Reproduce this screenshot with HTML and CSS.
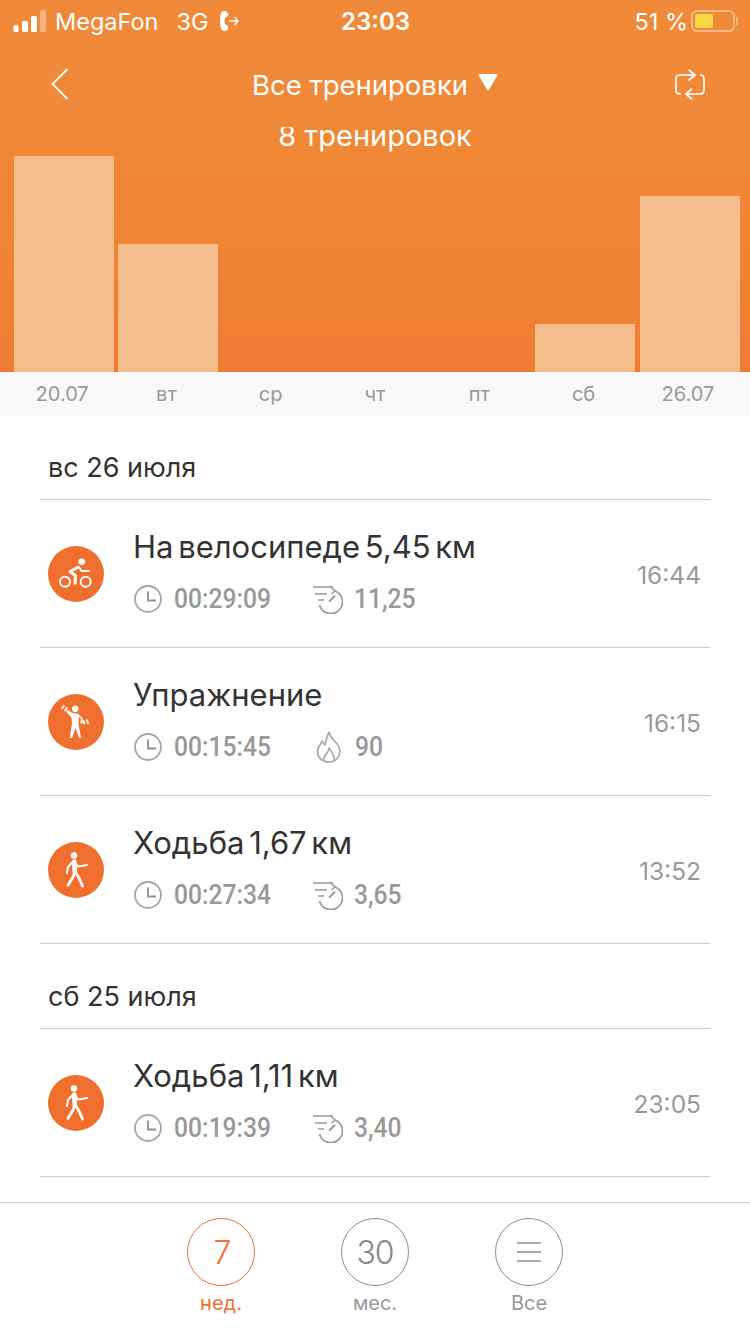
FILE: index.html
```html
<!DOCTYPE html>
<html lang="ru">
<head>
<meta charset="utf-8">
<title>Все тренировки</title>
<link rel="stylesheet" href="styles.css">
</head>
<body>
<svg class="sprite" aria-hidden="true">
  <symbol id="i-clock" viewBox="0 0 28 28"><circle cx="14" cy="14" r="13" fill="none" stroke="#a6a6a6" stroke-width="1.8"/><path d="M14 6.500V15.500H22" fill="none" stroke="#8f8f8f" stroke-width="1.8"/></symbol>
  <symbol id="i-speed" viewBox="0 -2 30 30"><g fill="none" stroke="#999" stroke-width="1.700"><path d="M0 1H20M2 8H14M5 14H11"/><path d="M6.500 19A11.700 11.700 0 1 0 22 5"/><path d="M17 0L22 5L18.500 8" stroke-width="1.500"/><path d="M16 15.700L22 9.700" stroke-width="2"/></g></symbol>
  <symbol id="i-flame" viewBox="0 0 26 32"><path d="M13 1C14 7 20 10 23 16C26 23 21 31 13 31C5 31 0 25 2 18C3 15 5 13 6 10C7 12 8 13 9 14C10 10 11 5 13 1Z M8 30C7 26 9 25 11 22C12 20 13 19 13 17C15 20 19 24 18 30" fill="none" stroke="#a6a6a6" stroke-width="1.600" stroke-linejoin="round"/></symbol>
  <symbol id="i-bike" viewBox="0 0 56 56"><circle cx="33.700" cy="15.700" r="3.300" fill="#fff"/><circle cx="17" cy="35.700" r="5" fill="none" stroke="#fff" stroke-width="1.900"/><circle cx="37.700" cy="35.700" r="5" fill="none" stroke="#fff" stroke-width="1.900"/><path d="M30.500 21L22 25.500L27.500 29.500L27 38.500" fill="none" stroke="#fff" stroke-width="3" stroke-linejoin="round"/><path d="M30.500 20.500L33.500 25H41.500" fill="none" stroke="#fff" stroke-width="2" stroke-linejoin="round"/></symbol>
  <symbol id="i-walk" viewBox="0 0 56 56"><circle cx="26" cy="13.500" r="3.200" fill="#fff"/><path d="M26.200 19.500L26.700 30.500" fill="none" stroke="#fff" stroke-width="4.500" stroke-linecap="round"/><path d="M26.700 30.500L25 35L20 43.300M28 31L31 36L34.500 44" fill="none" stroke="#fff" stroke-width="2.800" stroke-linecap="round" stroke-linejoin="round"/><path d="M27 20L30 24.500L39 23" fill="none" stroke="#fff" stroke-width="1.900" stroke-linecap="round" stroke-linejoin="round"/><path d="M24 20.500L20 25L19 31" fill="none" stroke="#fff" stroke-width="2" stroke-linecap="round" stroke-linejoin="round"/></symbol>
  <symbol id="i-gym" viewBox="0 0 56 56"><circle cx="27.300" cy="14.700" r="3.300" fill="#fff"/><path d="M24.500 19L31 20L30.500 30L33 44H31L27.500 34L24 44H21.700L24 29.500L23.500 23.500L18 17.500L19.500 16Z" fill="#fff"/><path d="M31 21.500L34 25L33 28.500H37" fill="none" stroke="#fff" stroke-width="1.400"/><path d="M13.500 15L16.500 11.500M16.500 17L19.500 13.500M35 26L37 30.500M38.500 25.500L40.500 30" stroke="#fff" stroke-width="2" fill="none" opacity="0.800"/></symbol>
</svg>
<div class="page">
  <header class="top">
    <div class="statusbar">
      <div class="status-left">
        <svg class="signal" viewBox="0 0 34 22"><rect x="0.500" y="15" width="5" height="7" rx="1.500" fill="#fff"/><rect x="9" y="11" width="6" height="11" rx="1.500" fill="#fff"/><rect x="18" y="6" width="6" height="16" rx="1.500" fill="#fff"/><rect x="27" y="0" width="6" height="22" rx="1.500" fill="#fff" opacity="0.350"/></svg>
        <span class="carrier">MegaFon</span>
        <span class="net">3G</span>
        <svg class="call" viewBox="0 0 19 22"><path d="M4 1C1 1 0 5 0 11S1 21 4 21C7 21 8.500 19 8 16L5 14C4.500 12 4.500 10 5 8L8 6C8.500 3 7 1 4 1Z" fill="#fff"/><path d="M9 11H18M14.500 7L18 11L14.500 15" fill="none" stroke="#fff" stroke-width="1.300"/></svg>
      </div>
      <div class="clock">23:03</div>
      <div class="status-right">
        <span class="pct">51 %</span>
        <span class="battery"><span class="battery-fill"></span></span>
        <span class="battery-cap"></span>
      </div>
    </div>
    <nav class="navbar">
      <svg class="back" viewBox="0 0 18 32"><path d="M16.500 1L1.500 16L16.500 31" fill="none" stroke="#fff" stroke-width="1.800"/></svg>
      <div class="nav-title"><span>Все тренировки</span><svg class="caret" viewBox="0 0 20 17"><path d="M1.500 1H18.500L10 15.500Z" fill="#fff" stroke="#fff" stroke-width="2" stroke-linejoin="round"/></svg></div>
      <svg class="swap" viewBox="0 0 30 31"><path d="M20 6H5Q1 6 1 10V21Q1 25 5 25H6M25 6Q29 6 29 10V21Q29 25 25 25H11M13.500 .5L20 6L13.500 11.500M17 19.500L11 25L17 30.500" fill="none" stroke="#fff" stroke-width="1.700"/></svg>
    </nav>
    <section class="chart">
      <div class="chart-title">8 тренировок</div>
      <div class="bars">
        <div class="bar" style="height:216px"></div>
        <div class="bar" style="height:128px"></div>
        <div class="bar" style="height:0"></div>
        <div class="bar" style="height:0"></div>
        <div class="bar" style="height:0"></div>
        <div class="bar" style="height:48px"></div>
        <div class="bar" style="height:176px"></div>
      </div>
    </section>
    <div class="axis"><span>20.07</span><span>вт</span><span>ср</span><span>чт</span><span>пт</span><span>сб</span><span>26.07</span></div>
  </header>

  <main class="list">
    <h2 class="day">вс 26 июля</h2>
    <article class="row">
      <div class="badge"><svg class="badge-icon"><use href="#i-bike"/></svg></div>
      <div class="info">
        <div class="name">На велосипеде 5,45 км</div>
        <div class="stats">
          <div class="stat stat-time"><svg class="ic-clock"><use href="#i-clock"/></svg><span class="val">00:29:09</span></div>
          <div class="stat"><svg class="ic-speed"><use href="#i-speed"/></svg><span class="val">11,25</span></div>
        </div>
      </div>
      <time class="when">16:44</time>
    </article>
    <article class="row">
      <div class="badge"><svg class="badge-icon"><use href="#i-gym"/></svg></div>
      <div class="info">
        <div class="name">Упражнение</div>
        <div class="stats">
          <div class="stat stat-time"><svg class="ic-clock"><use href="#i-clock"/></svg><span class="val">00:15:45</span></div>
          <div class="stat"><svg class="ic-flame"><use href="#i-flame"/></svg><span class="val">90</span></div>
        </div>
      </div>
      <time class="when">16:15</time>
    </article>
    <article class="row">
      <div class="badge"><svg class="badge-icon"><use href="#i-walk"/></svg></div>
      <div class="info">
        <div class="name">Ходьба 1,67 км</div>
        <div class="stats">
          <div class="stat stat-time"><svg class="ic-clock"><use href="#i-clock"/></svg><span class="val">00:27:34</span></div>
          <div class="stat"><svg class="ic-speed"><use href="#i-speed"/></svg><span class="val">3,65</span></div>
        </div>
      </div>
      <time class="when">13:52</time>
    </article>
    <h2 class="day day-next">сб 25 июля</h2>
    <article class="row">
      <div class="badge"><svg class="badge-icon"><use href="#i-walk"/></svg></div>
      <div class="info">
        <div class="name">Ходьба 1,11 км</div>
        <div class="stats">
          <div class="stat stat-time"><svg class="ic-clock"><use href="#i-clock"/></svg><span class="val">00:19:39</span></div>
          <div class="stat"><svg class="ic-speed"><use href="#i-speed"/></svg><span class="val">3,40</span></div>
        </div>
      </div>
      <time class="when">23:05</time>
    </article>
  </main>

  <footer class="tabs">
    <div class="tab tab-active"><div class="ring">7</div><div class="tab-label">нед.</div></div>
    <div class="tab"><div class="ring">30</div><div class="tab-label">мес.</div></div>
    <div class="tab"><div class="ring"><svg class="menu" viewBox="0 0 24 20"><path d="M0 1H24M0 10H24M0 19H24" stroke="#8f8f8f" stroke-width="1.600"/></svg></div><div class="tab-label">Все</div></div>
  </footer>
</div>
</body>
</html>
```

FILE: styles.css
```css
* { box-sizing: border-box; }
html, body { margin: 0; padding: 0; }
body { width: 750px; height: 1334px; overflow: hidden; background: #fff; font-family: Inter, "Noto Sans", "Liberation Sans", sans-serif; color: #333; }
.sprite { display: none; }
.page { width: 750px; height: 1334px; display: flex; flex-direction: column; }

.top { flex: none; color: #fff; }
.statusbar { height: 42px; background: #f08a38; display: grid; grid-template-columns: 1fr auto 1fr; align-items: center; padding: 0 12px 0 13px; font-size: 23.5px; }
.status-left { display: flex; align-items: center; }
.signal { width: 34px; height: 22px; margin-right: 8px; }
.carrier { margin-right: 18px; }
.net { margin-right: 11px; }
.call { width: 19px; height: 22px; }
.clock { font-weight: 600; font-size: 24px; }
.status-right { display: flex; align-items: center; justify-content: flex-end; }
.pct { margin-right: 3px; }
.battery { width: 44px; height: 22px; border: 2px solid rgba(255,255,255,.4); border-radius: 6px; padding: 2px; display: block; }
.battery-fill { display: block; width: 18px; height: 100%; background: #f9d848; border-radius: 2px; }
.battery-cap { width: 2px; height: 8px; background: rgba(255,255,255,.4); margin-left: 1px; }

.navbar { height: 85px; background: #f08a38; display: flex; align-items: center; justify-content: space-between; padding: 0 45px 0 51px; }
.back { width: 18px; height: 32px; margin-bottom: 1px; }
.nav-title { display: flex; align-items: center; gap: 10px; font-size: 27.5px; margin-left: 6px; }
.caret { width: 20px; height: 17px; margin-bottom: 4px; }
.swap { width: 30px; height: 31px; }

.chart { height: 245px; display: flex; flex-direction: column; overflow: hidden; background: linear-gradient(#f08936, #ee7d33); }
.chart-title { height: 18px; line-height: 18px; text-align: center; font-size: 29px; flex: none; }
.bars { flex: 1; display: grid; grid-template-columns: repeat(7, 100px); column-gap: 4.25px; align-items: end; padding-left: 14px; }
.bar { background: #f4bd8c; }

.axis { height: 44px; background: #f8f8f8; display: grid; grid-template-columns: repeat(7, 1fr); padding: 0 10px; align-items: center; text-align: center; color: #999; font-size: 20px; }

.list { flex: 1; min-height: 0; overflow: hidden; padding: 0 40px; }
.day { margin: 0; height: 84px; border-bottom: 1px solid #ccc; padding-top: 36px; padding-left: 8px; font-size: 27px; line-height: 32px; font-weight: 400; color: #333; }
.day-next { height: 85px; padding-top: 37px; }

.row { height: 148px; border-bottom: 1px solid #ccc; display: flex; align-items: center; padding: 0 9px 0 8px; }
.badge { width: 56px; height: 56px; border-radius: 50%; background: #f06f2e; flex: none; margin-right: 28px; }
.badge-icon { width: 56px; height: 56px; display: block; }
.info { flex: 1; min-width: 0; display: flex; flex-direction: column; padding-bottom: 7px; }
.name { font-size: 31px; line-height: 40px; word-spacing: -4px; color: #333; padding-left: 1px; }
.stats { display: flex; align-items: center; height: 30px; margin-top: 17px; }
.stat { display: flex; align-items: center; }
.stat-time { width: 181px; }
.ic-clock { width: 28px; height: 28px; margin: 0 12px 0 2px; }
.ic-speed { width: 30px; height: 30px; margin-right: 11px; }
.ic-flame { width: 26px; height: 32px; margin: 0 13px 0 3px; }
.val { display: inline-block; font-family: Roboto, "Liberation Sans", sans-serif; font-size: 28px; font-weight: 500; color: #999; transform: scaleX(.88); transform-origin: left center; }
.when { color: #999; font-size: 24.5px; flex: none; padding-top: 2px; }

.tabs { flex: none; height: 132px; border-top: 1px solid #d8d8d8; display: flex; justify-content: center; gap: 86px; padding-top: 15px; }
.tab { width: 68px; display: flex; flex-direction: column; align-items: center; color: #999; }
.ring { width: 68px; height: 68px; border: 1px solid #8f8f8f; border-radius: 50%; display: flex; align-items: center; justify-content: center; font-size: 32px; font-weight: 300; letter-spacing: -1px; color: #888; }
.tab-label { font-size: 20px; line-height: 24px; margin-top: 5px; white-space: nowrap; }
.tab-active .ring { border-color: #f2702f; color: #f2702f; padding-left: 2px; }
.tab-active .tab-label { color: #f2702f; }
.menu { width: 24px; height: 20px; }
```
